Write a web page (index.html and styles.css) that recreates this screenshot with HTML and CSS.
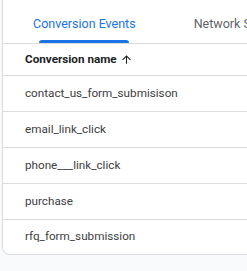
FILE: index.html
```html
<!DOCTYPE html>
<html>
<head>
<meta charset="utf-8">
<link rel="stylesheet" href="styles.css">
</head>
<body>
<div class="card">
  <div class="tabs">
    <div class="tab active"><span class="tab-label">Conversion Events</span><span class="indicator"></span></div>
    <div class="tab"><span class="tab-label">Network Settings</span></div>
  </div>
  <div class="table">
    <div class="row head">Conversion name <svg class="arrow" width="13" height="13" viewBox="0 0 24 24"><path d="M4 12l1.41 1.41L11 7.83V20h2V7.83l5.58 5.59L20 12l-8-8-8 8z" fill="#202124"/></svg></div>
    <div class="row">contact_us_form_submisison</div>
    <div class="row">email_link_click</div>
    <div class="row">phone___link_click</div>
    <div class="row">purchase</div>
    <div class="row last">rfq_form_submission</div>
  </div>
</div>
</body>
</html>
```
FILE: styles.css
```css
html, body {
  margin: 0;
  padding: 0;
  background: #f8f9fa;
  overflow: hidden;
  font-family: Roboto, "Liberation Sans", sans-serif;
}
.card {
  margin-left: 2px;
  width: 400px;
  background: #fff;
  border: 1px solid #dadce0;
  border-top: none;
  border-radius: 0 0 0 8px;
}
.tabs {
  display: flex;
  height: 43px;
  border-bottom: 1px solid #dadce0;
  padding-left: 30px;
  gap: 58px;
  overflow: hidden;
}
.tab {
  position: relative;
  display: flex;
  align-items: center;
  padding-top: 4px;
  font-size: 12.5px;
  color: #5f6368;
  white-space: nowrap;
}
.tab.active { color: #1a73e8; }
.indicator {
  position: absolute;
  left: 6px;
  right: 7px;
  bottom: 0;
  height: 3px;
  background: #1a73e8;
  border-radius: 3px 3px 0 0;
}
.row {
  height: 35px;
  display: flex;
  align-items: center;
  padding-left: 22px;
  font-size: 11.7px;
  color: #3c4043;
  border-bottom: 1px solid #dadce0;
  line-height: 1;
}
.row.head {
  height: 31px;
  font-weight: 700;
  color: #202124;
  gap: 3px;
}
.row.last { border-bottom: none; height: 34px; }
.arrow { display: block; }
```
